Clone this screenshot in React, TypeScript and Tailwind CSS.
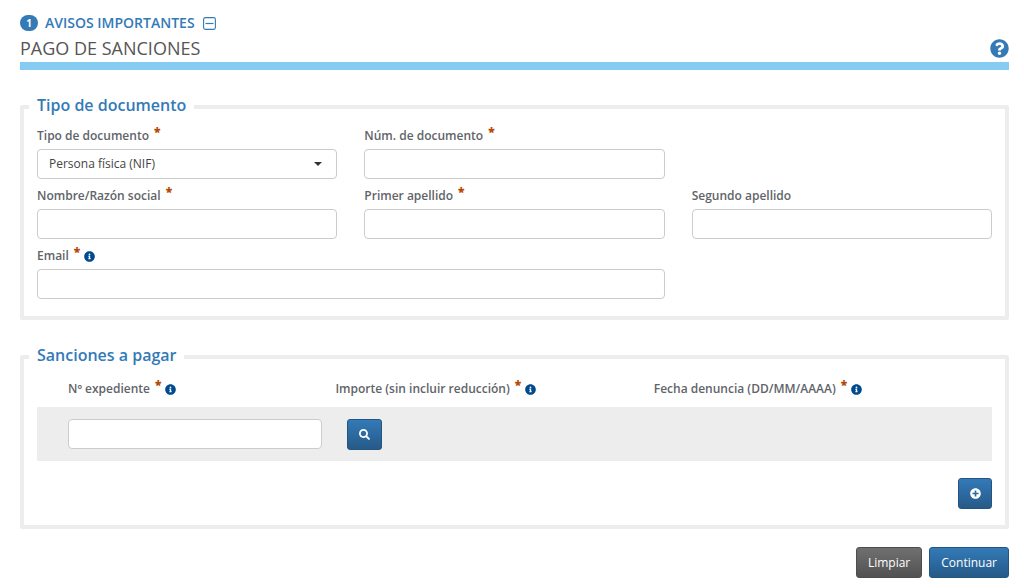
import { ReactNode } from "react";
import {
  FaInfoCircle,
  FaPlusCircle,
  FaQuestionCircle,
  FaSearch,
} from "react-icons/fa";

const inputClass =
  "block h-[30px] w-full rounded-[4px] border border-[#ccc] bg-white px-3 text-xs text-[#333]";

const primaryClass =
  "flex h-[31px] items-center justify-center rounded-[3px] border border-[#245580] bg-linear-to-b from-[#337ab7] to-[#265a88] text-xs font-medium text-white";

interface IMarks {
  required?: boolean;
  info?: boolean;
}

function Marks({ required, info }: IMarks) {
  return (
    <>
      {required && (
        <span className="ml-[5px] h-5 leading-3 font-extrabold text-[#b34700]">*</span>
      )}
      {info && <FaInfoCircle className="ml-1 size-[11px] text-[#004a8f]" />}
    </>
  );
}

interface IField extends IMarks {
  id: string;
  label: string;
  className?: string;
  children?: ReactNode;
}

function Field({ id, label, className, children, required, info }: IField) {
  return (
    <div className={className}>
      <label
        htmlFor={id}
        className="flex h-[30px] items-center pt-1 text-xs font-semibold"
      >
        {label}
        <Marks required={required} info={info} />
      </label>
      {children ?? <input id={id} type="text" className={inputClass} />}
    </div>
  );
}

interface ISection {
  title: string;
  className: string;
  children: ReactNode;
}

function Section({ title, className, children }: ISection) {
  return (
    <fieldset
      className={`min-w-0 rounded-[2px] border-4 border-[#ededed] px-[13px] ${className}`}
    >
      <legend className="-ml-2 px-2 pb-1 text-base leading-5 font-semibold text-[#337ab7]">
        {title}
      </legend>
      {children}
    </fieldset>
  );
}

interface IHeading {
  label: string;
  className: string;
}

function Heading({ label, className }: IHeading) {
  return (
    <th scope="col" className={`h-9 text-left font-semibold ${className}`}>
      <span className="flex items-center">
        {label}
        <Marks required info />
      </span>
    </th>
  );
}

function CollapseIcon() {
  return (
    <svg viewBox="0 0 13 13" className="ml-2 size-[13px]" fill="none" stroke="currentColor">
      <rect x="0.6" y="0.6" width="11.8" height="11.8" rx="1.8" strokeWidth="1.1" />
      <path d="M2.5 6.5h8" strokeWidth="1.2" />
    </svg>
  );
}

export default function App() {
  return (
    <main className="bg-white pt-3 pr-[15px] pb-3 pl-5 font-['Open_Sans',sans-serif] text-xs text-[#5f6469]">
      <header className="border-b-8 border-[#85cbf2]">
        <button
          type="button"
          className="flex h-[22px] items-center text-sm font-semibold text-[#337ab7]"
        >
          <span className="mr-[7px] flex h-4 w-[18px] items-center justify-center rounded-full bg-[#337ab7] text-[10px] font-bold text-white">
            1
          </span>
          AVISOS IMPORTANTES
          <CollapseIcon />
        </button>
        <div className="flex h-7 items-center justify-between">
          <h1 className="text-lg font-normal text-[#555]">PAGO DE SANCIONES</h1>
          <button type="button" aria-label="Ayuda" className="pt-px text-[#337ab7]">
            <FaQuestionCircle className="size-[19px]" />
          </button>
        </div>
      </header>

      <form>
        <Section title="Tipo de documento" className="mt-[25px] pb-[17px]">
          <div className="grid grid-cols-3 gap-x-[27px]">
            <Field id="tipo" label="Tipo de documento" required>
              <div className="relative">
                <select
                  id="tipo"
                  className="block h-[30px] w-full appearance-none rounded-[4px] border border-[#ccc] bg-white px-[11px] text-xs font-medium text-[#444]"
                >
                  <option>Persona física (NIF)</option>
                </select>
                <span className="pointer-events-none absolute top-[13px] right-[15px] border-x-4 border-t-4 border-x-transparent border-t-[#333]" />
              </div>
            </Field>
            <Field id="numero" label="Núm. de documento" required />
            <Field id="nombre" label="Nombre/Razón social" required className="col-start-1" />
            <Field id="apellido1" label="Primer apellido" required />
            <Field id="apellido2" label="Segundo apellido" />
            <Field id="email" label="Email" required info className="col-span-2" />
          </div>
        </Section>

        <Section title="Sanciones a pagar" className="mt-[25px] pb-4">
          <table className="mt-0.5 w-full table-fixed">
            <thead>
              <tr>
                <Heading label="Nº expediente" className="w-5/16 pl-[31px]" />
                <Heading label="Importe (sin incluir reducción)" className="w-1/3" />
                <Heading label="Fecha denuncia (DD/MM/AAAA)" className="" />
              </tr>
            </thead>
            <tbody>
              <tr className="h-[54px] bg-[#ededed]">
                <td className="pr-[13px] pl-[31px]">
                  <input
                    type="text"
                    aria-label="Nº expediente"
                    className={inputClass}
                  />
                </td>
                <td className="pl-3">
                  <button
                    type="button"
                    aria-label="Buscar"
                    className={`w-[35px] ${primaryClass}`}
                  >
                    <FaSearch className="size-[11px]" />
                  </button>
                </td>
                <td />
              </tr>
            </tbody>
          </table>
          <div className="mt-[17px] flex justify-end">
            <button
              type="button"
              aria-label="Añadir sanción"
              className={`w-[34px] ${primaryClass}`}
            >
              <FaPlusCircle className="size-[11px]" />
            </button>
          </div>
        </Section>

        <div className="mt-[18px] flex justify-end gap-[7px]">
          <button
            type="reset"
            className="h-[31px] rounded-[3px] border border-[#4d4d4d] bg-linear-to-b from-[#707070] to-[#525252] px-[11px] text-xs font-medium text-white"
          >
            Limpiar
          </button>
          <button type="button" className={`px-[11px] ${primaryClass}`}>
            Continuar
          </button>
        </div>
      </form>
    </main>
  );
}
